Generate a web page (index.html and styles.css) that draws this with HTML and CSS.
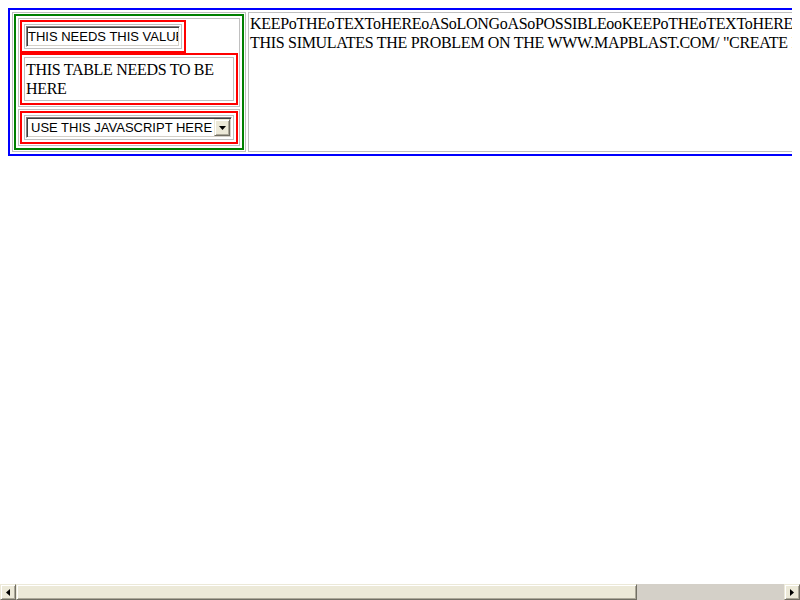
FILE: index.html
```html
<!DOCTYPE html>
<html>
<head>
<meta charset="utf-8">
<title>Table test</title>
<link rel="stylesheet" href="styles.css">
</head>
<body>
<table class="outer">
  <tr>
    <td class="cell left">
      <table class="green">
        <tr>
          <td class="cell">
            <table class="red">
              <tr><td class="cell"><input class="field" type="text" value="THIS NEEDS THIS VALUE"></td></tr>
            </table>
            <table class="red full">
              <tr><td class="cell text-cell">THIS TABLE NEEDS TO BE HERE</td></tr>
            </table>
          </td>
        </tr>
        <tr>
          <td class="cell">
            <table class="red full">
              <tr><td class="cell">
                <div class="select">
                  <span class="sel-text">USE THIS JAVASCRIPT HERE</span>
                  <span class="sel-btn"><svg width="7" height="4" viewBox="0 0 7 4"><polygon points="0,0 7,0 3.5,4" fill="#000"/></svg></span>
                </div>
              </td></tr>
            </table>
          </td>
        </tr>
      </table>
    </td>
    <td class="cell right">KEEPoTHEoTEXToHEREoASoLONGoASoPOSSIBLEooKEEPoTHEoTEXToHEREoASoLONGoASoPOSSIBLE<br>THIS SIMULATES THE PROBLEM ON THE WWW.MAPBLAST.COM/ "CREATE MAP" PAGE</td>
  </tr>
</table>

<div class="hscroll">
  <span class="sb-btn"><svg width="4" height="7" viewBox="0 0 4 7"><polygon points="4,0 4,7 0,3.5" fill="#000"/></svg></span>
  <span class="sb-thumb"></span>
  <span class="sb-track"></span>
  <span class="sb-btn"><svg width="4" height="7" viewBox="0 0 4 7"><polygon points="0,0 0,7 4,3.5" fill="#000"/></svg></span>
</div>
</body>
</html>
```
FILE: styles.css
```css
html {
  overflow: hidden;
}
body {
  margin: 8px;
  background: #fff;
  color: #000;
  font-family: "Liberation Serif", "Times New Roman", serif;
  font-size: 16px;
  line-height: 19px;
  letter-spacing: -0.3px;
}
table {
  border-collapse: separate;
  border-spacing: 2px;
}
.cell {
  padding: 1px;
  border: 1px solid #c0c0c0;
}
.text-cell {
  padding: 2px 1px;
}
.outer {
  border: 2px solid #0000ff;
}
.green {
  border: 2px solid #008000;
}
.red {
  border: 2px solid #ff0000;
}
.full {
  width: 100%;
}
.left {
  vertical-align: top;
}
.right {
  vertical-align: top;
}
.field {
  display: block;
  margin: 0;
  width: 154px;
  height: 21px;
  box-sizing: border-box;
  padding: 1px 1px;
  font: 13px "Liberation Sans", Arial, sans-serif;
  letter-spacing: 0;
  color: #000;
  background: #fff;
  border: 1px solid;
  border-color: #808080 #ffffff #ffffff #808080;
  box-shadow: inset 1px 1px #404040, inset -1px -1px #d4d0c8;
  outline: none;
}
.select {
  display: flex;
  align-items: stretch;
  width: 206px;
  height: 21px;
  box-sizing: border-box;
  padding: 1px;
  background: #fff;
  border: 1px solid;
  border-color: #808080 #ffffff #ffffff #808080;
  box-shadow: inset 1px 1px #404040, inset -1px -1px #d4d0c8;
  font: 13px "Liberation Sans", Arial, sans-serif;
  letter-spacing: 0;
}
.sel-text {
  flex: 1;
  padding-left: 3px;
  line-height: 17px;
  white-space: nowrap;
  overflow: hidden;
}
.sel-btn {
  width: 16px;
  box-sizing: border-box;
  display: flex;
  align-items: center;
  justify-content: center;
  background: #ece9d8;
  border: 1px solid;
  border-color: #ece9d8 #716f64 #716f64 #ece9d8;
  box-shadow: inset 1px 1px #fff, inset -1px -1px #aca899;
}
.hscroll {
  position: fixed;
  left: 0;
  right: 0;
  bottom: 0;
  height: 16px;
  display: flex;
  background: #d4d0c8;
}
.sb-btn {
  width: 16px;
  box-sizing: border-box;
  display: flex;
  align-items: center;
  justify-content: center;
  background: #ece9d8;
  border: 1px solid;
  border-color: #ece9d8 #716f64 #716f64 #ece9d8;
  box-shadow: inset 1px 1px #fff, inset -1px -1px #aca899;
}
.sb-thumb {
  width: 621px;
  box-sizing: border-box;
  background: #ece9d8;
  border: 1px solid;
  border-color: #ece9d8 #716f64 #716f64 #ece9d8;
  box-shadow: inset 1px 1px #fff, inset -1px -1px #aca899;
}
.sb-track {
  flex: 1;
  background: #d4d0c8;
}
```
